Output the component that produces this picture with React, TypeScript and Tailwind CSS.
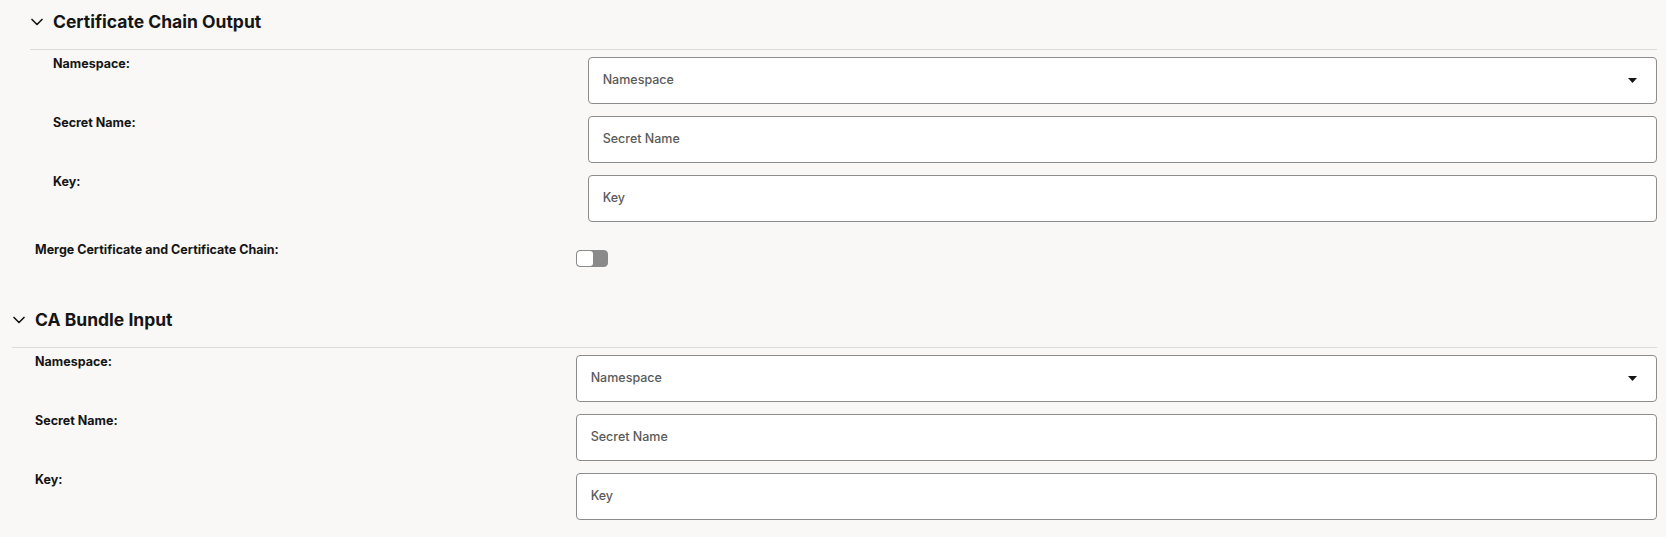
import React from "react";
import { ChevronDown } from "lucide-react";

function SectionHeader({ title }: { title: string }) {
  return (
    <div className="flex items-center gap-[6px] border-b border-[#dcdbd9] pt-[8px] pb-[13px]">
      <ChevronDown size={20} strokeWidth={2} className="-ml-[3px] text-[#151515]" />
      <h2 className="text-[17.5px] leading-[28px] font-bold text-[#151515]">{title}</h2>
    </div>
  );
}

function Row({ label, children }: { label: string; children: React.ReactNode }) {
  return (
    <div className="grid grid-cols-3 mb-[12px]">
      <div className="col-span-1 -mt-[1px] text-[12.5px] leading-[16px] font-bold text-[#151515]">{label}</div>
      <div className="col-span-2">{children}</div>
    </div>
  );
}

function TextField({ placeholder }: { placeholder: string }) {
  return (
    <div className="flex h-[47px] items-center rounded-[4px] border border-[#8c8c8c] bg-white px-[14px]">
      <span className="text-[12.5px] font-medium text-[#5a5a5a]">{placeholder}</span>
    </div>
  );
}

function SelectField({ placeholder }: { placeholder: string }) {
  return (
    <div className="flex h-[47px] items-center justify-between rounded-[4px] border border-[#8c8c8c] bg-white pl-[14px] pr-[19px]">
      <span className="text-[12.5px] font-medium text-[#5a5a5a]">{placeholder}</span>
      <svg width="9" height="5" viewBox="0 0 9 5" className="text-[#151515]">
        <polygon points="0,0 9,0 4.5,5" fill="currentColor" />
      </svg>
    </div>
  );
}

function SecretFields() {
  return (
    <div className="pl-[23px] pt-[7px]">
      <Row label="Namespace:">
        <SelectField placeholder="Namespace" />
      </Row>
      <Row label="Secret Name:">
        <TextField placeholder="Secret Name" />
      </Row>
      <Row label="Key:">
        <TextField placeholder="Key" />
      </Row>
    </div>
  );
}

export default function App() {
  return (
    <div className="min-h-screen bg-[#f9f8f6] pl-[12px] pr-[9px] font-['Inter',sans-serif] text-[#151515]">
      <div>
        <section className="ml-[18px]">
          <SectionHeader title="Certificate Chain Output" />
          <SecretFields />
        </section>
        <div className="grid grid-cols-3 pl-[23px] mt-[20px]">
          <div className="col-span-1 text-[12.5px] leading-[16px] font-bold">Merge Certificate and Certificate Chain:</div>
          <div className="col-span-2 pt-[8px]">
            <div className="flex h-[17px] w-[32px] items-stretch overflow-hidden rounded-[4px] border border-[#8a8a8a] bg-[#8a8a8a]">
              <div className="w-[16px] rounded-[3px] bg-white" />
            </div>
          </div>
        </div>
      </div>
      <section className="mt-[31px]">
        <SectionHeader title="CA Bundle Input" />
        <SecretFields />
      </section>
    </div>
  );
}
